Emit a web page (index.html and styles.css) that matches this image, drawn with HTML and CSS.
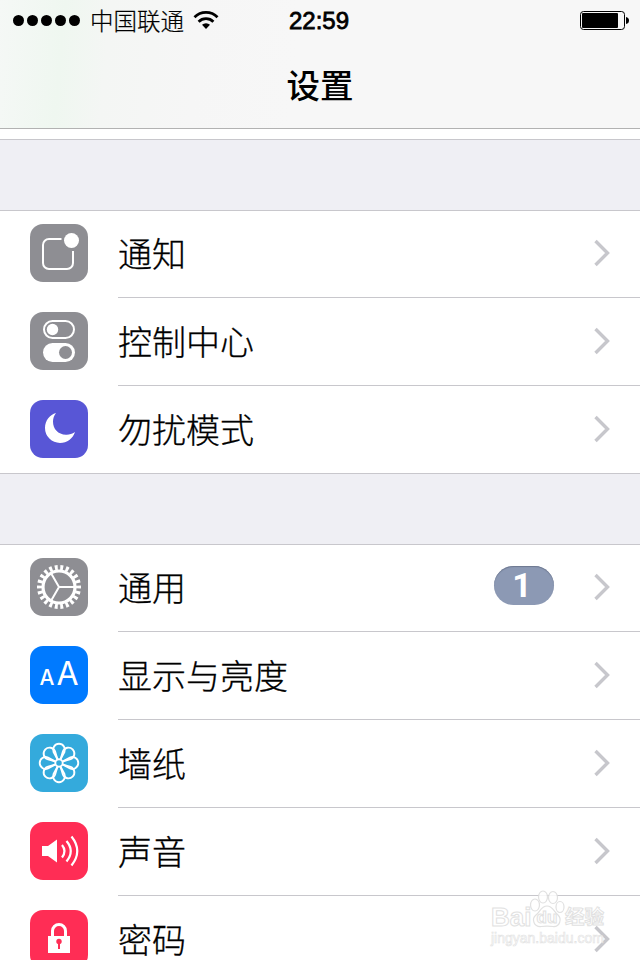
FILE: index.html
```html
<!DOCTYPE html>
<html lang="zh-CN">
<head>
  <meta charset="UTF-8">
  <meta name="viewport" content="width=device-width, initial-scale=1.0">
  <title>设置</title>
  <link rel="stylesheet" href="styles.css">
</head>
<body>
  <header class="header">
    <div class="status-bar">
      <div class="carrier">
        <span class="signal"><i></i><i></i><i></i><i></i><i></i></span>
        <span class="carrier-name">中国联通</span>
        <svg class="wifi" width="26" height="20" viewBox="0 0 26 20" fill="none" stroke="#000" stroke-width="2.8">
          <path d="M1.5 7.2a16.3 16.3 0 0 1 23 0"/>
          <path d="M5.6 11.7a10.5 10.5 0 0 1 14.8 0"/>
          <path d="M13 19l-4-4.2a5.8 5.8 0 0 1 8 0z" fill="#000" stroke="none"/>
        </svg>
      </div>
      <div class="time">22:59</div>
      <div class="power">
        <svg width="49" height="19" viewBox="0 0 49 19">
          <rect x=".5" y=".5" width="44" height="18" rx="3" fill="none" stroke="#000"/>
          <rect x="2" y="2" width="36" height="15" rx="1" fill="#000"/>
          <path d="M46 6q3 .5 3 3.500t-3 3.500z" fill="#000"/>
        </svg>
      </div>
    </div>
    <h1>设置</h1>
  </header>

  <main class="settings">
    <ul class="group">
      <li class="row">
        <svg class="icon gray" viewBox="0 0 58 58" fill="none" stroke="#fff" stroke-width="2">
          <path d="M31.5 15H19a6 6 0 0 0-6 6v18a6 6 0 0 0 6 6h18a6 6 0 0 0 6-6V27"/>
          <circle cx="41.5" cy="16.5" r="7.5" fill="#fff" stroke="none"/>
        </svg>
        <div class="row-body"><span class="label">通知</span><svg class="arrow" viewBox="0 0 16 28"><path d="M1.5 2l12 12-12 12"/></svg></div>
      </li>
      <li class="row">
        <svg class="icon gray" viewBox="0 0 58 58">
          <rect x="14" y="9" width="30" height="17" rx="8.5" fill="none" stroke="#fff" stroke-width="2"/>
          <circle cx="22.5" cy="17.5" r="5.7" fill="#fff"/>
          <rect x="13" y="31" width="32" height="19" rx="9.5" fill="#fff"/>
          <circle cx="35.5" cy="40.5" r="6.5" fill="#8e8e93"/>
        </svg>
        <div class="row-body"><span class="label">控制中心</span><svg class="arrow" viewBox="0 0 16 28"><path d="M1.5 2l12 12-12 12"/></svg></div>
      </li>
      <li class="row">
        <svg class="icon purple" viewBox="0 0 58 58">
          <path d="M26 13C20 14.500 15 20.500 15 28a15 15 0 0 0 15 15c7 0 13-4.500 15-11-3 2-6 2.900-9 2.700C28 34.500 23 29 23 21.500c0-3 1-6 3-8.500z" fill="#fff"/>
        </svg>
        <div class="row-body"><span class="label">勿扰模式</span><svg class="arrow" viewBox="0 0 16 28"><path d="M1.5 2l12 12-12 12"/></svg></div>
      </li>
    </ul>

    <ul class="group">
      <li class="row">
        <svg class="icon gray" viewBox="0 0 58 58" fill="none" stroke="#fff">
          <circle cx="29" cy="29" r="16" stroke-width="3.2"/>
          <circle cx="29" cy="29" r="19.5" stroke-width="5" pathLength="44" stroke-dasharray="1.05 .95" stroke-dashoffset=".525"/>
          <path d="M29 29h15M29 29l-7.500-13M29 29l-7.500 13" stroke-width="2"/>
        </svg>
        <div class="row-body"><span class="label">通用</span><span class="badge">1</span><svg class="arrow" viewBox="0 0 16 28"><path d="M1.5 2l12 12-12 12"/></svg></div>
      </li>
      <li class="row">
        <div class="icon blue letters"><span class="small-a">A</span><span class="big-a">A</span></div>
        <div class="row-body"><span class="label">显示与亮度</span><svg class="arrow" viewBox="0 0 16 28"><path d="M1.5 2l12 12-12 12"/></svg></div>
      </li>
      <li class="row">
        <svg class="icon cyan" viewBox="0 0 58 58" fill="none" stroke="#fff" stroke-width="1.9">
          <defs>
            <path id="petal" d="M27.4 25L23.600 18A5.900 5.900 0 1 1 34.400 18L30.600 25"/>
          </defs>
          <circle cx="29" cy="29" r="3.7"/>
          <use href="#petal"/>
          <use href="#petal" transform="rotate(45 29 29)"/>
          <use href="#petal" transform="rotate(90 29 29)"/>
          <use href="#petal" transform="rotate(135 29 29)"/>
          <use href="#petal" transform="rotate(180 29 29)"/>
          <use href="#petal" transform="rotate(225 29 29)"/>
          <use href="#petal" transform="rotate(270 29 29)"/>
          <use href="#petal" transform="rotate(315 29 29)"/>
        </svg>
        <div class="row-body"><span class="label">墙纸</span><svg class="arrow" viewBox="0 0 16 28"><path d="M1.5 2l12 12-12 12"/></svg></div>
      </li>
      <li class="row">
        <svg class="icon red" viewBox="0 0 58 58" fill="none" stroke="#fff" stroke-width="2.2">
          <path d="M12 24h6l9-6.500v23L18 34h-6z" fill="#fff" stroke="none"/>
          <path d="M32 23q5 6 0 12.500M36.500 19q8.500 10 0 20.500M41.500 14.500q11.500 14.500 0 29"/>
        </svg>
        <div class="row-body"><span class="label">声音</span><svg class="arrow" viewBox="0 0 16 28"><path d="M1.5 2l12 12-12 12"/></svg></div>
      </li>
      <li class="row">
        <svg class="icon red" viewBox="0 0 58 58">
          <path d="M22.500 27v-6a6.500 6.500 0 0 1 13 0v6" fill="none" stroke="#fff" stroke-width="3"/>
          <rect x="18" y="26" width="22" height="17" fill="#fff"/>
          <circle cx="29" cy="31.5" r="2.7" fill="#ff2d55"/>
          <path d="M29 32v7" stroke="#ff2d55" stroke-width="2"/>
        </svg>
        <div class="row-body"><span class="label">密码</span><svg class="arrow" viewBox="0 0 16 28"><path d="M1.5 2l12 12-12 12"/></svg></div>
      </li>
    </ul>
  </main>

  <div class="watermark">
    <div class="brand">
      <span class="bai">Bai</span>
      <span class="paw">
        <svg width="36" height="38" viewBox="0 0 36 38" fill="#fff" stroke="#dcdcdc" stroke-width="1.2">
          <ellipse cx="6" cy="15" rx="4.5" ry="6"/>
          <ellipse cx="14" cy="7" rx="4.5" ry="6"/>
          <ellipse cx="24" cy="7.5" rx="4.5" ry="6"/>
          <ellipse cx="31" cy="17" rx="4" ry="5.5"/>
          <path d="M18 16c6 0 7 6 11 9 4 4 2 12-5 11.500-4-.5-8-.5-12 0C5 37 2 29 7 25c4-3 5-9 11-9z"/>
        </svg>
        <span class="du">du</span>
      </span>
      <span class="jingyan">经验</span>
    </div>
    <div class="address">jingyan.baidu.com</div>
  </div>
</body>
</html>
```
FILE: styles.css
```css
* {
  box-sizing: border-box;
}

body {
  margin: 0;
  height: 960px;
  overflow: hidden;
  position: relative;
  background-color: #fff;
  color: #000;
  font-family: "Liberation Sans", "Noto Sans CJK SC", sans-serif;
}

.header {
  height: 129px;
  border-bottom: 1px solid #b2b2b2;
  background: linear-gradient(95deg, #f5f8f6 0, #eff7f0 65px, #f4f6f4 110px, #f6f6f6 200px, #f7f7f7 300px);
}

.status-bar {
  display: grid;
  grid-template-columns: 1fr 70px 1fr;
  align-items: center;
  height: 40px;
  padding: 0 11px 0 13px;
}

.carrier {
  display: flex;
  align-items: center;
}

.signal {
  display: flex;
  gap: 3px;
}

.signal i {
  width: 11px;
  height: 11px;
  border-radius: 50%;
  background-color: #000;
}

.carrier-name {
  margin: 0 9px 0 10px;
  padding-top: 4px;
  font-size: 23.5px;
  font-weight: 300;
  line-height: 36px;
  white-space: nowrap;
  -webkit-text-stroke: 0.2px #000;
}

.wifi {
  margin-bottom: 1px;
}

.time {
  padding: 2px 4px 0 0;
  font-size: 24px;
  text-align: center;
  -webkit-text-stroke: 0.8px #000;
}

.power {
  display: flex;
  justify-content: flex-end;
}

h1 {
  margin: 0;
  padding-top: 5px;
  font-size: 33.5px;
  font-weight: 500;
  line-height: 83px;
  text-align: center;
}

.settings {
  display: flex;
  flex-direction: column;
  gap: 70px;
  margin-top: 10px;
  padding-top: 70px;
  border-top: 1px solid #c8c7cc;
  background-color: #efeff4;
}

.group {
  margin: 0;
  padding: 0;
  list-style: none;
  background-color: #fff;
  box-shadow: inset 0 1px #c8c7cc;
}

.row {
  display: flex;
  height: 88px;
  padding-left: 30px;
}

.icon {
  flex: none;
  width: 58px;
  height: 58px;
  margin: 14px 30px 0 0;
  border-radius: 13px;
}

.gray {
  background-color: #8e8e93;
}

.purple {
  background-color: #5856d6;
}

.blue {
  background-color: #007aff;
}

.cyan {
  background-color: #34aadc;
}

.red {
  background-color: #ff2d55;
}

.letters {
  display: flex;
  align-items: baseline;
  justify-content: center;
  gap: 2px;
  color: #fff;
  font-family: Inter, sans-serif;
  line-height: 55px;
}

.small-a {
  font-size: 21px;
  font-weight: 500;
}

.big-a {
  font-size: 32px;
  font-weight: 400;
}

.row-body {
  display: flex;
  flex: 1;
  align-items: center;
  padding-right: 30px;
  padding-bottom: 2px;
  border-bottom: 1px solid #c8c7cc;
}

.row:last-child {
  border-bottom: 1px solid #c8c7cc;
}

.row:last-child .row-body {
  border-bottom: none;
}

.label {
  flex: 1;
  padding-top: 6px;
  font-size: 34px;
  font-weight: 300;
  line-height: 79px;
  -webkit-text-stroke: 0.3px #000;
}

.badge {
  width: 60px;
  height: 39px;
  margin: 0 40px 3px 0;
  border-radius: 20px;
  background-color: #8c99b4;
  box-shadow: inset 0 1px 1px #6d7890;
  color: #fff;
  font-family: Roboto, sans-serif;
  font-size: 34px;
  font-weight: bold;
  line-height: 38px;
  text-align: center;
  text-indent: -4px;
}

.arrow {
  width: 16px;
  height: 28px;
  fill: none;
  stroke: #c7c7cc;
  stroke-width: 3.4;
}

/* Baidu mark over the bottom right corner */
.watermark {
  position: absolute;
  top: 890px;
  left: 491px;
  width: 120px;
  color: #fff;
  -webkit-text-stroke: 1px #dcdcdc;
  opacity: 0.85;
}

.brand {
  display: flex;
  align-items: flex-end;
  height: 38px;
  font-weight: bold;
}

.bai {
  width: 38px;
  font-size: 26px;
  line-height: 22px;
}

.paw {
  display: grid;
}

.paw svg,
.du {
  grid-area: 1 / 1;
}

.du {
  align-self: end;
  font-size: 17px;
  line-height: 21px;
  text-align: center;
}

.jingyan {
  font-size: 19.5px;
  line-height: 22px;
  white-space: nowrap;
}

.address {
  padding-top: 3px;
  font-size: 14px;
  line-height: 14px;
  -webkit-text-stroke-width: 0.6px;
}
```
